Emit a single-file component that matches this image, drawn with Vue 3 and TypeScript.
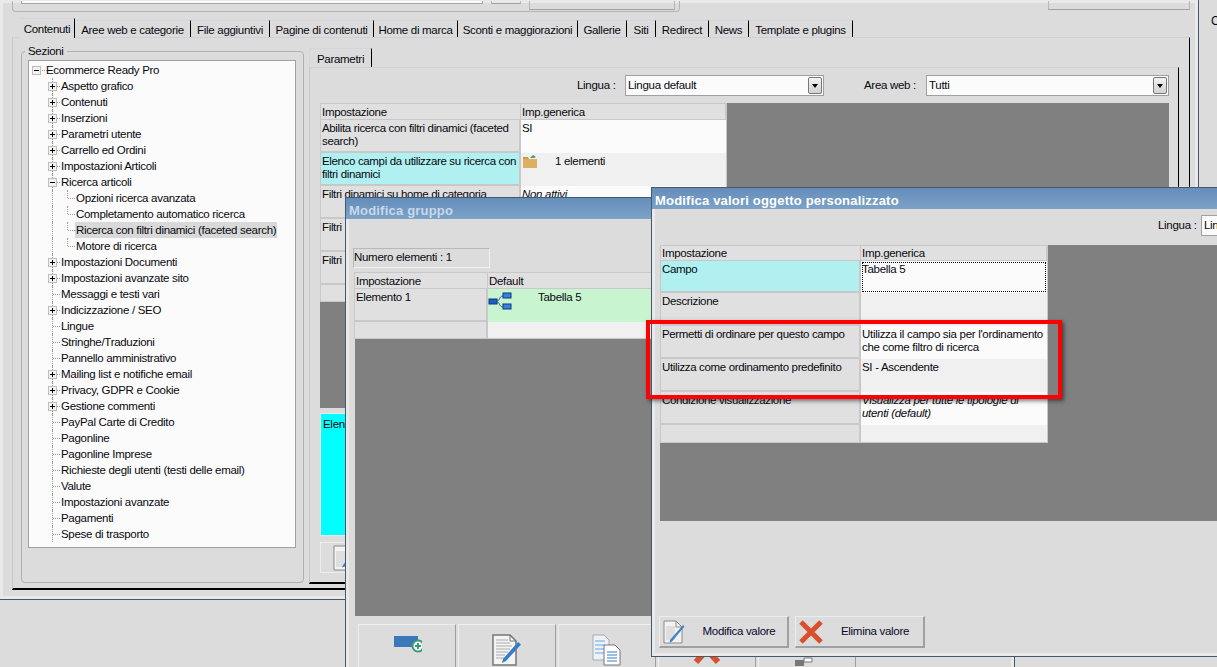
<script setup lang="ts">
interface Row { label: string; value?: string; italic?: boolean; hl?: boolean; icon?: string; focus?: boolean }
const tabs = [
  { t: 'Contenuti', w: 55, active: true }, { t: 'Aree web e categorie', w: 116 }, { t: 'File aggiuntivi', w: 79 },
  { t: 'Pagine di contenuti', w: 104 }, { t: 'Home di marca', w: 84 }, { t: 'Sconti e maggiorazioni', w: 120 },
  { t: 'Gallerie', w: 49 }, { t: 'Siti', w: 29 }, { t: 'Redirect', w: 53 }, { t: 'News', w: 40 }, { t: 'Template e plugins', w: 104 },
]
const tree: { t: string; lvl: number; exp?: string; sel?: boolean }[] = [
  { t: 'Ecommerce Ready Pro', lvl: 0, exp: '−' },
  { t: 'Aspetto grafico', lvl: 1, exp: '+' }, { t: 'Contenuti', lvl: 1, exp: '+' }, { t: 'Inserzioni', lvl: 1, exp: '+' },
  { t: 'Parametri utente', lvl: 1, exp: '+' }, { t: 'Carrello ed Ordini', lvl: 1, exp: '+' }, { t: 'Impostazioni Articoli', lvl: 1, exp: '+' },
  { t: 'Ricerca articoli', lvl: 1, exp: '−' }, { t: 'Opzioni ricerca avanzata', lvl: 2 }, { t: 'Completamento automatico ricerca', lvl: 2 },
  { t: 'Ricerca con filtri dinamici (faceted search)', lvl: 2, sel: true }, { t: 'Motore di ricerca', lvl: 2 },
  { t: 'Impostazioni Documenti', lvl: 1, exp: '+' }, { t: 'Impostazioni avanzate sito', lvl: 1, exp: '+' }, { t: 'Messaggi e testi vari', lvl: 1 },
  { t: 'Indicizzazione / SEO', lvl: 1, exp: '+' }, { t: 'Lingue', lvl: 1 }, { t: 'Stringhe/Traduzioni', lvl: 1 }, { t: 'Pannello amministrativo', lvl: 1 },
  { t: 'Mailing list e notifiche email', lvl: 1, exp: '+' }, { t: 'Privacy, GDPR e Cookie', lvl: 1, exp: '+' }, { t: 'Gestione commenti', lvl: 1, exp: '+' },
  { t: 'PayPal Carte di Credito', lvl: 1 }, { t: 'Pagonline', lvl: 1 }, { t: 'Pagonline Imprese', lvl: 1 }, { t: 'Richieste degli utenti (testi delle email)', lvl: 1 },
  { t: 'Valute', lvl: 1 }, { t: 'Impostazioni avanzate', lvl: 1 }, { t: 'Pagamenti', lvl: 1 }, { t: 'Spese di trasporto', lvl: 1 },
]
const mainRows: Row[] = [
  { label: 'Abilita ricerca con filtri dinamici (faceted search)', value: 'SI' },
  { label: 'Elenco campi da utilizzare su ricerca con filtri dinamici', value: '1 elementi', hl: true, icon: 'folder' },
  { label: 'Filtri dinamici su home di categoria', value: 'Non attivi', italic: true },
  { label: 'Filtri', value: '' }, { label: 'Filtri', value: '' }, { label: '', value: '' },
]
const frontRows: Row[] = [
  { label: 'Campo', value: 'Tabella 5', hl: true, focus: true },
  { label: 'Descrizione', value: '' },
  { label: 'Permetti di ordinare per questo campo', value: "Utilizza il campo sia per l'ordinamento che come filtro di ricerca" },
  { label: 'Utilizza come ordinamento predefinito', value: 'SI - Ascendente' },
  { label: 'Condizione visualizzazione', value: 'Visualizza per tutte le tipologie di utenti (default)', italic: true },
  { label: '', value: '' },
]
</script>

<template>
  <div class="desktop">
    <section class="win win-main">
      <div class="top-strip">
        <div class="top-group">
          <div class="top-input"></div>
          <div class="top-btn small"></div>
          <div class="top-btn wide"></div>
        </div>
        <div class="top-btn right"></div>
      </div>
      <nav class="tabs">
        <div v-for="t in tabs" :key="t.t" class="tab" :class="{ active: t.active }" :style="{ width: t.w + 'px' }">{{ t.t }}</div>
      </nav>
      <div class="tab-body">
        <fieldset class="sections">
          <legend>Sezioni</legend>
          <ul class="tree">
            <li v-for="n in tree" :key="n.t" class="node" :class="'l' + n.lvl">
              <span v-if="n.exp" class="exp" :class="n.exp === '+' ? 'plus' : 'minus'"></span>
              <span class="dash"></span>
              <span class="node-t" :class="{ sel: n.sel }">{{ n.t }}</span>
            </li>
          </ul>
        </fieldset>
        <div class="params">
          <div class="inner-tab">Parametri</div>
          <div class="inner-body">
            <div class="filters">
              <label class="f-label lang">Lingua :</label>
              <div class="select s-lang">Lingua default<span class="arrow"></span></div>
              <label class="f-label area">Area web :</label>
              <div class="select s-area">Tutti<span class="arrow"></span></div>
            </div>
            <div class="gray gray-main">
              <div class="pgrid main-grid">
                <div class="cell head">Impostazione</div><div class="cell head">Imp.generica</div>
                <template v-for="(r, i) in mainRows" :key="i">
                  <div class="cell lab" :class="{ hl: r.hl, last: i === 5 }">{{ r.label }}</div>
                  <div class="cell val" :class="{ odd: i % 2 === 1, it: r.italic, last: i === 5 }">
                    <svg v-if="r.icon" class="folder" width="16" height="14" viewBox="0 0 16 14"><path d="M1 4h14v9H1z" fill="#dcb060"/><path d="M1 4V2h5l1 2z" fill="#c79a45"/><path d="M8 3l3-3 3 2-2 1z" fill="#4f9a6a"/></svg>
                    <span :class="{ iconed: r.icon }">{{ r.value }}</span>
                  </div>
                </template>
              </div>
            </div>
            <div class="cyan">Elenco</div>
            <div class="action">
              <svg class="ic-edit" width="26" height="26" viewBox="0 0 26 26"><path d="M2 1h15l6 6v18H2z" fill="#f4f4f4" stroke="#888"/><path d="M4 6h11v16H4z" fill="#dedede"/><path d="M11 20L22 7l1.5 1.5L13 21.5l-3 1z" fill="#3f7fc4"/></svg>
            </div>
          </div>
        </div>
      </div>
    </section>

    <div class="side-c">C</div>

    <section class="win win-group">
      <header class="title inactive">Modifica gruppo</header>
      <div class="count-row"><div class="count">Numero elementi : 1</div></div>
      <div class="gray gray-group">
        <div class="pgrid group-grid">
          <div class="cell head">Impostazione</div><div class="cell head">Default</div>
          <div class="cell lab tall">Elemento 1</div>
          <div class="cell val green tall">
            <svg class="flow" width="24" height="18" viewBox="0 0 24 18"><rect x="1" y="7" width="8" height="5" fill="#1c5fc0" stroke="#0b3a80"/><rect x="15" y="1" width="8" height="5" fill="#3a80dc" stroke="#0b3a80"/><rect x="15" y="12" width="8" height="5" fill="#3a80dc" stroke="#0b3a80"/><path d="M9 9c3 0 2-5 6-5M9 10c3 0 2 5 6 5" fill="none" stroke="#2a5a90"/></svg>
            <span class="tab5">Tabella 5</span>
          </div>
          <div class="cell lab last"></div><div class="cell val odd last"></div>
        </div>
      </div>
      <div class="big-btns">
        <div class="big-btn">
          <svg width="30" height="20" viewBox="0 0 30 20"><rect x="2" y="2" width="24" height="11" fill="#3a78b8"/><circle cx="26" cy="12" r="5.5" fill="#fff" stroke="#3a9a78" stroke-width="2"/><path d="M23 12h6M26 9v6" stroke="#3a9a78" stroke-width="2"/></svg>
        </div>
        <div class="big-btn">
          <svg width="32" height="32" viewBox="0 0 32 32"><path d="M2 1h17l6 6v24H2z" fill="#f4f4f4" stroke="#777" stroke-width="1.5"/><path d="M19 1v6h6" fill="none" stroke="#777"/><path d="M5 6h12M5 9h14M5 12h16M5 15h14M5 18h12M5 21h9M5 24h8" stroke="#aaa"/><path d="M12 25L27 8l3 2.5L15 27l-4 2z" fill="#3a7cc4"/></svg>
        </div>
        <div class="big-btn">
          <svg width="30" height="32" viewBox="0 0 30 32"><path d="M1 1h11l5 5v20H1z" fill="#eef2f6" stroke="#aaa"/><path d="M3 7h10M3 11h10M3 15h10M3 19h10" stroke="#6aa6e0"/><path d="M12 11h11l5 5v15H12z" fill="#fff" stroke="#777"/><path d="M15 18h10M15 21h10M15 24h10M15 27h10" stroke="#3a7cc4"/></svg>
        </div>
        <div class="big-btn">
          <svg width="32" height="32" viewBox="0 0 32 32"><path d="M5 4l22 24M27 4L5 28" stroke="#d9502f" stroke-width="6"/></svg>
        </div>
        <div class="big-btn">
          <svg width="32" height="32" viewBox="0 0 32 32"><path d="M4 26h9v6H4z" fill="#777"/><path d="M13 24h8v4h-8z" fill="#fff" stroke="#777"/></svg>
        </div>
      </div>
    </section>

    <section class="win win-front">
      <header class="title">Modifica valori oggetto personalizzato</header>
      <div class="lang-row">
        <label class="f-label front-lab">Lingua :</label>
        <div class="select s-front">Lingua default</div>
      </div>
      <div class="gray gray-front">
        <div class="pgrid front-grid">
          <div class="cell head">Impostazione</div><div class="cell head">Imp.generica</div>
          <template v-for="(r, i) in frontRows" :key="i">
            <div class="cell lab" :class="{ hl: r.hl, last: i === 5 }">{{ r.label }}</div>
            <div class="cell val" :class="{ odd: i % 2 === 1, it: r.italic, focus: r.focus, last: i === 5 }">{{ r.value }}</div>
          </template>
        </div>
      </div>
      <div class="front-btns">
        <button class="btn">
          <svg class="btn-ic" width="24" height="24" viewBox="0 0 24 24"><path d="M1 1h12l6 6v16H1z" fill="#f2f2f2" stroke="#8a8a8a"/><path d="M13 1v6h6" fill="none" stroke="#8a8a8a"/><path d="M3 6h9v14H3z" fill="#dedede"/><path d="M7 20L20 5l1.5 1.5L9 21.5l-2.5 1z" fill="#3f83c9"/></svg>
          <span class="btn-t">Modifica valore</span>
        </button>
        <button class="btn">
          <svg class="btn-ic" width="24" height="24" viewBox="0 0 24 24"><path d="M2 2l20 20M22 2L2 22" stroke="#d9502f" stroke-width="5"/></svg>
          <span class="btn-t">Elimina valore</span>
        </button>
      </div>
    </section>

    <div class="callout"></div>
  </div>
</template>

<style>
html, body { margin: 0; padding: 0; background: #dcdcdc; }
</style>

<style scoped>
.desktop { position: relative; width: 1217px; height: 667px; overflow: hidden; background: #dcdcdc; font: 11.5px/13px "Liberation Sans", Arial, sans-serif; letter-spacing: -0.3px; color: #08080f; }
.win { position: absolute; box-sizing: border-box; background: #dcdcdc; border: 1px solid #46586e; box-shadow: inset 0 0 0 3px #e9e9e9; }

.win-main { left: -1px; top: -1px; width: 1200px; height: 601px; padding: 1px 8px 9px 12px; display: flex; flex-direction: column; }
.top-strip { height: 11px; display: flex; justify-content: space-between; box-sizing: border-box; }
.top-group { width: 668px; height: 11px; box-sizing: border-box; border: 1px solid #b4b4b4; border-top: 0; border-radius: 0 0 4px 4px; display: flex; align-items: flex-start; padding-left: 8px; gap: 8px; }
.top-input { width: 460px; height: 2px; background: #fbfbfb; border-bottom: 1px solid #a6a6a6; border-right: 1px solid #a6a6a6; border-left: 1px solid #a6a6a6; }
.top-btn { border: 1px solid #b8b8b8; border-top: 0; border-bottom-color: #a0a0a0; }
.top-btn.small { width: 28px; height: 2px; }
.top-btn.wide { width: 144px; height: 8px; }
.top-btn.right { width: 140px; height: 8px; margin-right: 0; }
.tabs { display: flex; padding-left: 8px; margin-top: 8px; height: 17px; box-sizing: border-box; }
.tab { box-sizing: border-box; height: 18px; line-height: 19px; text-align: center; border-right: 1px solid #000; border-top: 1px solid #d4d4dc; white-space: nowrap; }
.tab.active { height: 20px; margin-top: -2px; line-height: 20px; border-top-color: #d4d4dc; background: #dcdcdc; position: relative; }
.tab-body { flex: 1; box-sizing: border-box; display: flex; align-items: flex-start; gap: 5px; padding: 0 0 0 8px; border-top: 1px solid #d0d0da; border-left: 1px solid #c8c8c8; border-right: 1px solid #000; border-bottom: 2px solid #000; }
.sections { box-sizing: border-box; width: 283px; height: 538px; margin: 7px 0 0; padding: 2px 7px 0 6px; border: 1px solid #b0b0b0; border-radius: 4px; }
.sections legend { padding: 0 3px; margin-left: -3px; line-height: 13px; }
.tree { list-style: none; margin: 0; padding: 1px 0 0; box-sizing: border-box; height: 488px; width: 268px; background: #fbfbfb; border: 1px solid #a0a0a0; position: relative; }
.node { height: 16px; line-height: 16px; position: relative; white-space: nowrap; }
.node.l0 { padding-left: 16px; }
.node.l1 { padding-left: 31px; }
.node.l2 { padding-left: 46px; }
.node.l1::before { content: ""; position: absolute; left: 23px; top: 0; height: 16px; border-left: 1px dotted #999; }
.node.l2::before { content: ""; position: absolute; left: 23px; top: 0; height: 16px; border-left: 1px dotted #999; }
.node.l2::after { content: ""; position: absolute; left: 38px; top: 0; height: 8px; border-left: 1px dotted #999; }
.dash { position: absolute; top: 8px; width: 7px; border-top: 1px dotted #999; }
.l0 .dash { left: 11px; }
.l1 .dash { left: 24px; }
.l2 .dash { left: 39px; }
.exp { position: absolute; top: 4px; box-sizing: border-box; width: 9px; height: 9px; background: #f2f2f2; border: 1px solid #bdbdbd; z-index: 1; }
.exp::before { content: ""; position: absolute; left: 1px; top: 3px; width: 5px; height: 1px; background: #000; }
.exp.plus::after { content: ""; position: absolute; left: 3px; top: 1px; width: 1px; height: 5px; background: #000; }
.l0 .exp { left: 3px; }
.l1 .exp { left: 19px; }
.node-t { display: inline-block; padding: 0 1px; }
.node-t.sel { background: #d9d9d9; }
.params { flex: 1; display: flex; flex-direction: column; align-self: stretch; margin-top: 10px; min-width: 0; }
.inner-tab { width: 63px; height: 20px; box-sizing: border-box; line-height: 20px; padding-left: 7px; border-top: 1px solid #d4d4dc; border-right: 1px solid #000; border-left: 1px solid #d4d4dc; border-radius: 3px 0 0 0; }
.inner-body { flex: 1; box-sizing: border-box; border-top: 1px solid #d0d0da; border-left: 1px solid #c8c8c8; border-right: 1px solid #000; border-bottom: 2px solid #000; margin: -1px 10px 4px 0; padding: 7px 9px 0 10px; display: flex; flex-direction: column; }
.filters { display: flex; align-items: center; height: 21px; margin-bottom: 7px; }
.f-label { white-space: nowrap; }
.f-label.lang { margin-left: 257px; width: 48px; flex: none; }
.f-label.area { margin-left: 40px; width: 62px; flex: none; }
.select { box-sizing: border-box; height: 21px; line-height: 19px; background: #fbfbfb; border: 1px solid #a0a0a0; padding-left: 2px; position: relative; }
.s-lang { width: 199px; flex: none; }
.s-area { width: 243px; flex: none; }
.arrow { position: absolute; right: 1px; top: 1px; width: 14px; height: 17px; box-sizing: border-box; background: linear-gradient(#f2f2f2, #d2d2d2); border: 1px solid #777; border-radius: 2px; }
.arrow::after { content: ""; position: absolute; left: 3px; top: 6px; border: 3px solid transparent; border-top: 4px solid #000; border-bottom: 0; }
.gray { background: #808080; }
.gray-main { height: 305px; width: 849px; }
.pgrid { display: grid; background: #e0e0e0; border: 1px solid #c8c8c8; box-sizing: border-box; }
.main-grid { width: 407px; grid-template-columns: 200px 1fr; grid-template-rows: 16px repeat(5, 33px) 16px; }
.cell { box-sizing: border-box; padding: 2px 2px 0 1px; overflow: hidden; border-bottom: 2px solid #c8c8c8; }
.cell.head { background: #e0e0e0; border-right: 1px solid #c8c8c8; padding-top: 2px; border-bottom-width: 1px; }
.lab { background: #e0e0e0; border-right: 2px solid #c8c8c8; padding-right: 0; letter-spacing: -0.35px; }
.lab.hl { background: #b0f0f0; }
.val { background: #fbfbfb; border-bottom: 0; display: block; }
.val.odd { background: #f0f0f0; }
.val.it { font-style: italic; }
.last { border-bottom: 0; }
.folder { position: absolute; margin: 0 0 0 0; }
.iconed { margin-left: 33px; }
.cyan { width: 60px; height: 123px; margin-top: 5px; box-sizing: border-box; background: #00ffff; border: 1px solid #e8e8e8; padding: 4px 2px; }
.action { width: 60px; height: 31px; margin-top: 6px; box-sizing: border-box; border: 1px solid #ededed; padding: 2px 0 0 11px; }
.ic-edit { display: block; }
.side-c { position: absolute; left: 1211px; top: 15px; font-size: 12px; }

.title { height: 21px; background: linear-gradient(#648dba, #7ca2c8); color: #fff; font: 700 13px/25px "Liberation Sans", Arial, sans-serif; letter-spacing: 0.2px; padding-left: 3px; margin: 0 -3px; white-space: nowrap; box-sizing: border-box; overflow: hidden; }
.title.inactive { color: #c8d8e8; }

.win-group { left: 345px; top: 197px; width: 670px; height: 500px; padding: 0 3px 0; display: flex; flex-direction: column; }
.count-row { padding: 29px 0 0 4px; height: 49px; box-sizing: border-box; margin-left: 0; flex: none; }
.count { box-sizing: border-box; width: 137px; height: 20px; line-height: 16px; border: 1px solid #b8b8b8; border-right-color: #f0f0f0; border-bottom-color: #f0f0f0; padding-left: 0; }
.gray-group { height: 344px; margin: 4px 0 0 6px; flex: none; }
.group-grid { width: 380px; grid-template-columns: 133px 1fr; grid-template-rows: 16px 33px 16px; margin-left: -1px; }
.green { background: #c8f5cf; position: relative; }
.cell.tall { height: 33px; }
.flow { position: absolute; left: 0; top: 3px; }
.tab5 { margin-left: 49px; }
.big-btns { display: flex; gap: 2px; padding: 8px 0 0 9px; }
.big-btn { width: 98px; height: 60px; box-sizing: border-box; border: 1px solid #efefef; border-right-color: #9e9e9e; display: flex; justify-content: center; padding-top: 9px; align-items: flex-start; flex: none; }

.win-front { left: 651px; top: 187px; width: 600px; height: 470px; padding: 0 3px; display: flex; flex-direction: column; }
.lang-row { display: flex; align-items: flex-start; height: 36px; box-sizing: border-box; padding: 6px 0 0 503px; flex: none; }
.front-lab { width: 43px; flex: none; line-height: 21px; }
.s-front { width: 90px; flex: none; }
.gray-front { height: 276px; margin-left: 5px; flex: none; }
.front-grid { width: 388px; grid-template-columns: 200px 1fr; grid-template-rows: 15px 32px repeat(4, 33px) 17px; }
.front-grid .cell.head { padding-top: 1px; }
.focus { outline: 1px dotted #000; outline-offset: -2px; }
.front-btns { display: flex; gap: 6px; margin: 95px 0 0 4px; }
.btn { width: 130px; height: 32px; display: flex; align-items: center; padding: 0 0 0 3px; background: #dcdcdc; border: 1px solid #ececec; border-right: 2px solid #a0a0a0; border-bottom: 2px solid #a0a0a0; font: inherit; letter-spacing: inherit; color: #08082a; position: relative; box-sizing: border-box; }
.btn-ic { flex: none; }
.btn-t { flex: 1; text-align: center; padding-left: 4px; white-space: nowrap; }

.callout { position: absolute; left: 646px; top: 320px; width: 416px; height: 79px; box-sizing: border-box; border: 4px solid #ff0000; box-shadow: 2px 2px 4px rgba(0, 0, 0, 0.5); }
</style>
